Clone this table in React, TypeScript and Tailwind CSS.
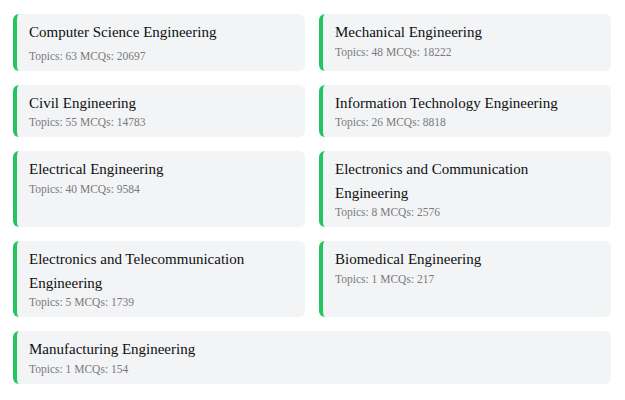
const branches = [
  { name: 'Computer Science Engineering', topics: 63, mcqs: 20697, extra: true },
  { name: 'Mechanical Engineering', topics: 48, mcqs: 18222 },
  { name: 'Civil Engineering', topics: 55, mcqs: 14783 },
  { name: 'Information Technology Engineering', topics: 26, mcqs: 8818 },
  { name: 'Electrical Engineering', topics: 40, mcqs: 9584 },
  { name: 'Electronics and Communication Engineering', topics: 8, mcqs: 2576 },
  { name: 'Electronics and Telecommunication Engineering', topics: 5, mcqs: 1739 },
  { name: 'Biomedical Engineering', topics: 1, mcqs: 217 },
  { name: 'Manufacturing Engineering', topics: 1, mcqs: 154, wide: true },
];

const App: React.FC = () => {
  return (
    <div className="min-h-[400px] bg-white pl-[13px] pr-[14px] pt-[14px] pb-4 font-['Liberation_Serif',serif]">
      <div className="grid grid-cols-2 gap-[14px]">
        {branches.map((b) => (
          <div
            key={b.name}
            className={`rounded-md border-l-4 border-[#22c55e] bg-[#f3f4f6] pl-3 pr-4 pt-[7px] pb-[8px] ${
              b.wide ? 'col-span-2' : ''
            }`}
          >
            <div className="text-[15px] leading-[23.5px] text-[#0f0f0f]">{b.name}</div>
            <div
              className={`text-[11.5px] leading-[14px] text-[#7a7a7a] ${b.extra ? 'mt-1' : ''}`}
            >
              Topics: {b.topics} MCQs: {b.mcqs}
            </div>
          </div>
        ))}
      </div>
    </div>
  );
};

export default App;
